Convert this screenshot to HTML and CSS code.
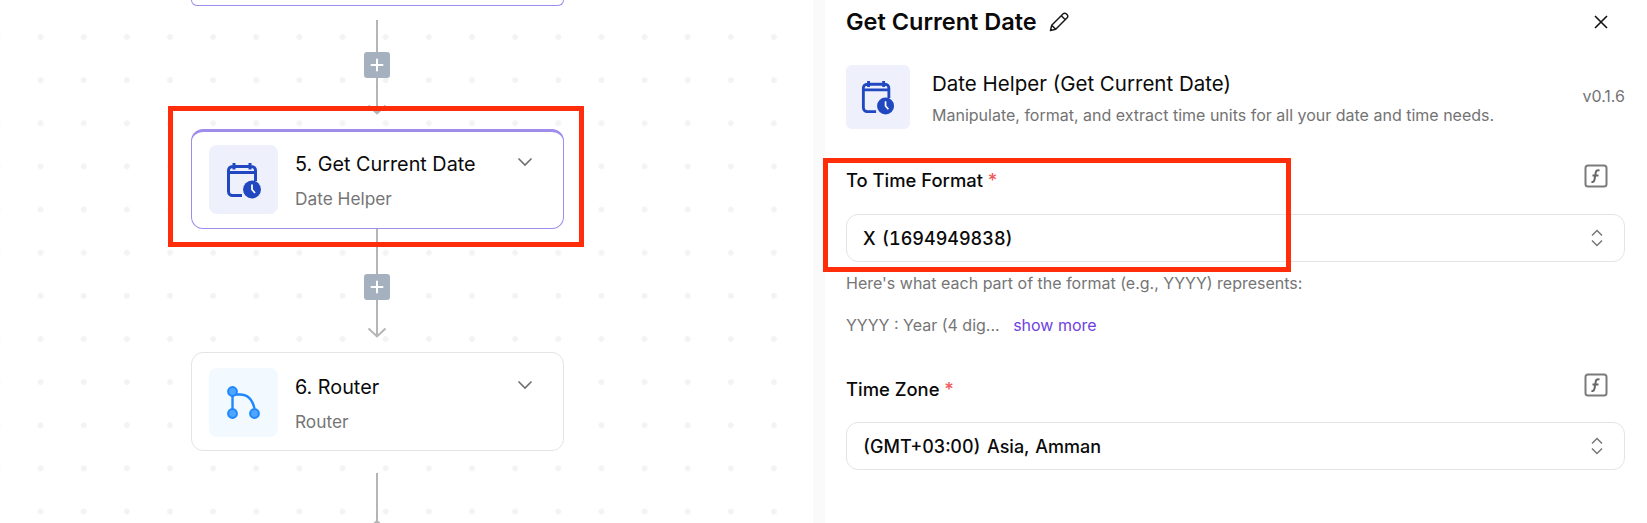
FILE: index.html
```html
<!DOCTYPE html>
<html lang="en">
<head>
<meta charset="utf-8">
<title>Get Current Date</title>
<link rel="stylesheet" href="styles.css">
</head>
<body>
<div class="app">
  <section class="canvas">
    <div class="flow">
      <div class="node node-prev"></div>
      <div class="link link-first">
        <span class="plus"><svg width="14" height="14" viewBox="0 0 14 14"><path d="M7 1.500v11M1.500 7h11" stroke="#fff" stroke-width="2" stroke-linecap="round"/></svg></span>
        <svg class="arrow" width="20" height="11" viewBox="0 0 20 11"><path d="M1.500 1.500 10 9.500l8.500-8" fill="none" stroke="#b5b5b5" stroke-width="2"/></svg>
      </div>
      <div class="node node-active">
        <span class="node-icon tint-indigo">
          <svg class="glyph" width="36" height="38" viewBox="0 0 36 38"><use href="#cal"/></svg>
        </span>
        <div class="node-text">
          <div class="node-title">5. Get Current Date</div>
          <div class="node-sub">Date Helper</div>
        </div>
        <svg class="chev" width="16" height="10" viewBox="0 0 16 10"><path d="M1.500 1.500 8 8l6.500-6.500" fill="none" stroke="#6f6f6f" stroke-width="1.600"/></svg>
      </div>
      <div class="link link-second">
        <span class="plus plus-second"><svg width="14" height="14" viewBox="0 0 14 14"><path d="M7 1.500v11M1.500 7h11" stroke="#fff" stroke-width="2" stroke-linecap="round"/></svg></span>
        <svg class="arrow" width="20" height="11" viewBox="0 0 20 11"><path d="M1.500 1.500 10 9.500l8.500-8" fill="none" stroke="#b5b5b5" stroke-width="2"/></svg>
      </div>
      <div class="node node-router">
        <span class="node-icon tint-sky">
          <svg width="36" height="36" viewBox="0 0 36 36">
            <path d="M6.500 6.500v22M6.500 9.500H14c7.500 0 12.500 5.500 14.500 14" fill="none" stroke="#1e87ff" stroke-width="2.400"/>
            <circle cx="6.500" cy="6.500" r="4.400" fill="#4fa5ff" stroke="#1e87ff" stroke-width="2"/>
            <circle cx="6.500" cy="28.500" r="4.400" fill="#4fa5ff" stroke="#1e87ff" stroke-width="2"/>
            <circle cx="28.500" cy="28.500" r="4.400" fill="#4fa5ff" stroke="#1e87ff" stroke-width="2"/>
          </svg>
        </span>
        <div class="node-text">
          <div class="node-title">6. Router</div>
          <div class="node-sub">Router</div>
        </div>
        <svg class="chev" width="16" height="10" viewBox="0 0 16 10"><path d="M1.500 1.500 8 8l6.500-6.500" fill="none" stroke="#6f6f6f" stroke-width="1.600"/></svg>
      </div>
      <div class="link link-third">
        <svg class="arrow-up" width="20" height="8" viewBox="0 0 20 8"><path d="M4 7.500 10 2l6 5.500" fill="none" stroke="#b5b5b5" stroke-width="2"/></svg>
      </div>
    </div>
  </section>

  <aside class="panel">
    <header class="panel-head">
      <h1 class="panel-title">Get Current Date</h1>
      <svg class="pencil" width="22" height="22" viewBox="0 0 22 22"><path d="M2.500 19.500l1.200-5.200L15.200 2.800a2.100 2.100 0 0 1 3 0l1 1a2.100 2.100 0 0 1 0 3L7.700 18.300zM13.300 4.700l4 4M3.700 14.300l4 4" fill="none" stroke="#1a1a1a" stroke-width="1.500" stroke-linejoin="round"/></svg>
      <svg class="close" width="14" height="14" viewBox="0 0 14 14"><path d="M1 1l12 12M13 1 1 13" stroke="#111" stroke-width="1.600"/></svg>
    </header>

    <div class="piece">
      <span class="piece-icon tint-indigo">
        <svg width="34" height="36" viewBox="0 0 36 38"><use href="#cal"/></svg>
      </span>
      <div class="piece-text">
        <div class="piece-name">Date Helper (Get Current Date)</div>
        <div class="piece-desc">Manipulate, format, and extract time units for all your date and time needs.</div>
      </div>
      <span class="piece-version">v0.1.6</span>
    </div>

    <div class="field field-format">
      <div class="field-head">
        <span class="field-label">To Time Format <span class="req">*</span></span>
        <svg width="24" height="24" viewBox="0 0 24 24"><use href="#fx"/></svg>
      </div>
      <div class="select">
        <span>X (1694949838)</span>
        <svg width="14" height="20" viewBox="0 0 14 20"><use href="#updown"/></svg>
      </div>
      <p class="help">Here's what each part of the format (e.g., YYYY) represents:</p>
      <p class="help help-more">YYYY : Year (4 dig... <a class="more">show more</a></p>
    </div>

    <div class="field field-zone">
      <div class="field-head">
        <span class="field-label">Time Zone <span class="req">*</span></span>
        <svg width="24" height="24" viewBox="0 0 24 24"><use href="#fx"/></svg>
      </div>
      <div class="select">
        <span>(GMT+03:00) Asia, Amman</span>
        <svg width="14" height="20" viewBox="0 0 14 20"><use href="#updown"/></svg>
      </div>
    </div>
  </aside>
</div>

<div class="mark mark-node"></div>
<div class="mark mark-field"></div>

<svg class="defs" width="0" height="0">
  <defs>
    <g id="cal">
      <path d="M16 34.500H6.500a4 4 0 0 1-4-4V9.500a4 4 0 0 1 4-4h19a4 4 0 0 1 4 4V20M2.500 11.500h27M8 2v6.500M24 2v6.500" fill="none" stroke="#2148c0" stroke-width="3"/>
      <circle cx="26" cy="28.500" r="9" fill="#2148c0"/>
      <path d="M26 23.500v5l3 3.500" fill="none" stroke="#fff" stroke-width="1.800"/>
    </g>
    <g id="fx">
      <rect x="1.500" y="1.500" width="21" height="21" rx="2.500" fill="none" stroke="#7b7b7b" stroke-width="2"/>
      <path d="M15.500 6.500c-2.500-.8-3.500.3-3.800 2.200l-1.200 7c-.3 1.800-1.300 2.600-3 2M8.500 11.500h6" fill="none" stroke="#666" stroke-width="2"/>
    </g>
    <g id="updown">
      <path d="M2 7.500 7 2.500l5 5M2 12.500l5 5 5-5" fill="none" stroke="#777" stroke-width="1.500"/>
    </g>
  </defs>
</svg>
</body>
</html>
```

FILE: styles.css
```css
* { box-sizing: border-box; }

html, body {
  margin: 0;
  height: 523px;
  overflow: hidden;
  background: #fff;
}

body {
  font-family: Inter, "Liberation Sans", sans-serif;
  color: #0a0a0a;
  position: relative;
}

.defs { position: absolute; }

.app {
  display: flex;
  height: 523px;
}

/* canvas */
.canvas {
  width: 813px;
  flex: none;
  overflow: hidden;
  background-color: #fff;
  background-image: radial-gradient(circle at center, #f3f3f3 0, #f3f3f3 2.6px, transparent 3.2px);
  background-size: 43.150px 43.150px;
  background-position: 19px 15.430px;
}

.flow {
  display: flex;
  flex-direction: column;
  margin-left: 191px;
  width: 373px;
}

.node {
  display: flex;
  align-items: flex-start;
  height: 99px;
  padding: 15px 30px 0 17px;
  background: #fff;
  border: 1px solid #e4e4e4;
  border-radius: 12px;
}

.node-prev {
  height: 6px;
  padding: 0;
  border: 1px solid #a08ceb;
  border-top: 0;
  border-radius: 0 0 12px 12px;
}

.node-active {
  height: 100px;
  padding-top: 13px;
  border-color: #a08ceb;
  border-top-width: 3px;
}

.node-icon {
  width: 69px;
  height: 69px;
  flex: none;
  border-radius: 8px;
  display: flex;
  align-items: center;
  justify-content: center;
}

.tint-indigo { background: #eef0fb; }
.tint-sky { background: #f2faff; }

.node-text {
  flex: 1;
  margin-left: 17px;
  padding-top: 7px;
}

.node-title {
  font-size: 19.800px;
  line-height: 24px;
  font-weight: 400;
  color: #0a0a0a;
}

.node-sub {
  font-size: 17.300px;
  line-height: 22px;
  margin-top: 12px;
  color: #757575;
}

.chev { margin-top: 12px; flex: none; }

/* connectors */
.link {
  position: relative;
  display: flex;
  flex-direction: column;
  align-items: center;
  justify-content: flex-end;
  width: 100%;
}

.link::before {
  content: "";
  position: absolute;
  left: 185px;
  top: 0;
  bottom: 1px;
  width: 2px;
  background: #b5b5b5;
}

.link-first { height: 95px; margin: 14px 0; }
.link-second { height: 109px; margin-bottom: 14px; }
.link-third { height: 50px; margin-top: 22px; overflow: hidden; }
.link-third::before { bottom: 0; }

.arrow {
  position: relative;
  margin-left: -1px;
}

.arrow-up {
  position: absolute;
  left: 176px;
  bottom: -4px;
}

.plus {
  position: absolute;
  left: 173px;
  top: 32px;
  width: 26px;
  height: 26px;
  border-radius: 3px;
  background: #a6b1bf;
  display: flex;
  align-items: center;
  justify-content: center;
}

.plus-second { top: 45px; }

/* panel */
.panel {
  flex: 1;
  min-width: 0;
  border-left: 12px solid #fafafa;
  padding: 10px 22px 0 21px;
}

.panel-head {
  display: flex;
  align-items: center;
  height: 24px;
}

.panel-title {
  margin: 0;
  font-size: 23.500px;
  line-height: 24px;
  font-weight: 600;
  color: #0a0a0a;
}

.pencil { margin-left: 11px; flex: none; }

.close {
  margin-left: auto;
  margin-right: 17px;
  flex: none;
}

.piece {
  display: flex;
  align-items: flex-start;
  margin-top: 31px;
  height: 64px;
}

.piece-icon {
  width: 64px;
  height: 64px;
  flex: none;
  border-radius: 6px;
  display: flex;
  align-items: center;
  justify-content: center;
}

.piece-text {
  flex: 1;
  margin-left: 22px;
  padding-top: 7px;
}

.piece-name {
  font-size: 20.500px;
  line-height: 24px;
  color: #0a0a0a;
}

.piece-desc {
  font-size: 16px;
  line-height: 20px;
  margin-top: 9px;
  color: #737373;
}

.piece-version {
  font-size: 16px;
  line-height: 20px;
  margin-top: 21px;
  color: #737373;
}

.field-format { margin-top: 35px; }
.field-zone { margin-top: 38px; }

.field-head {
  display: flex;
  align-items: flex-start;
  justify-content: space-between;
  height: 24px;
  padding-right: 17px;
}

.field-label {
  font-size: 18.400px;
  line-height: 22px;
  margin-top: 5px;
  font-weight: 500;
  color: #0a0a0a;
}

.req {
  color: #f05a5a;
}

.select {
  display: flex;
  align-items: center;
  justify-content: space-between;
  height: 48px;
  margin-top: 25px;
  padding: 0 20px 0 16px;
  border: 1px solid #e4e4e4;
  border-radius: 12px;
  font-size: 18px;
  font-weight: 500;
  font-variant-numeric: tabular-nums;
  word-spacing: 1.500px;
  color: #0a0a0a;
}

.field-format .select { margin-top: 26px; }

.help {
  margin: 11px 0 0;
  font-size: 16px;
  line-height: 20px;
  color: #757575;
}

.help-more { margin-top: 22px; }

.more {
  color: #6e41e2;
  margin-left: 9px;
}

/* red annotation rectangles over the screenshot */
.mark {
  position: absolute;
  border: 5px solid #ff2d0a;
  pointer-events: none;
}

.mark-node {
  left: 168px;
  top: 106px;
  width: 416px;
  height: 141px;
}

.mark-field {
  left: 823px;
  top: 158px;
  width: 468px;
  height: 114px;
}
```
